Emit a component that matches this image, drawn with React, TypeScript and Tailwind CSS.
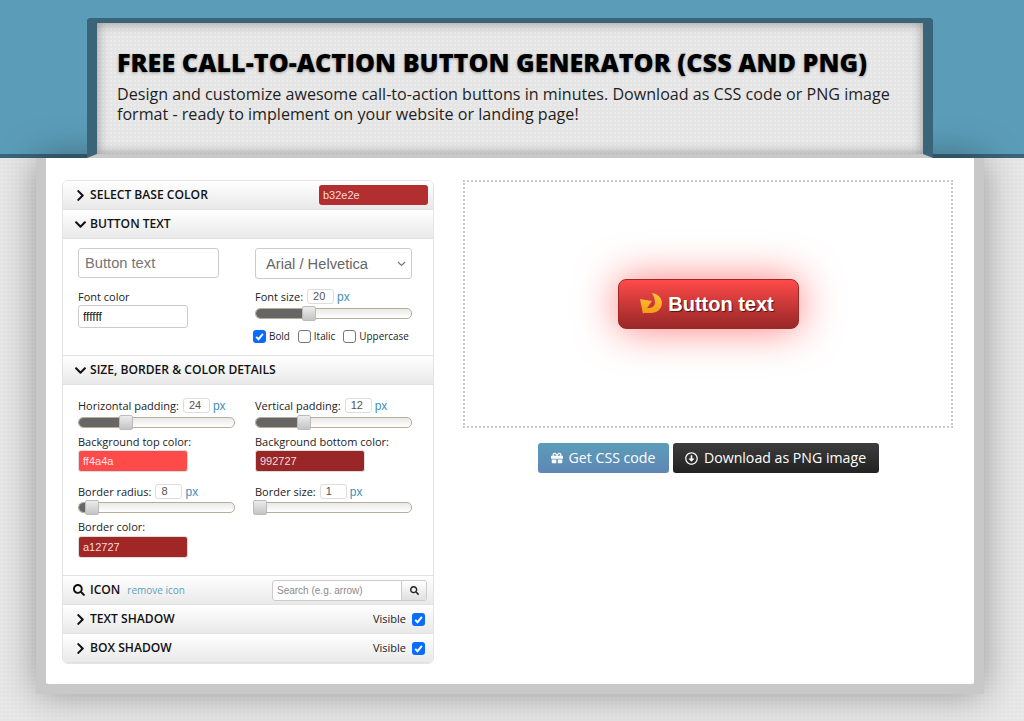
import { FaChevronDown, FaChevronRight, FaSearch, FaGift, FaRegArrowAltCircleDown } from "react-icons/fa";

const sans = "font-['Open_Sans',sans-serif]";
const arial = "font-['Liberation_Sans',Arial,sans-serif]";
const dither = "bg-[radial-gradient(rgba(255,255,255,0.22)_1px,transparent_1.5px)] bg-[length:4px_4px]";

function Check() {
  return (
    <span className="flex h-[13px] w-[13px] flex-shrink-0 items-center justify-center rounded-[3px] bg-[#0a6cff]">
      <svg width="11" height="11" viewBox="0 0 11 11" fill="none">
        <path d="M2.2 5.8 4.5 8.2 8.9 2.8" stroke="#fff" strokeWidth="1.9" />
      </svg>
    </span>
  );
}

function Box() {
  return <span className="h-[13px] w-[13px] flex-shrink-0 rounded-[3px] border border-[#767676] bg-white" />;
}

function Row({ children, open }: { children: React.ReactNode; open?: boolean }) {
  return (
    <div className="flex h-[29px] flex-shrink-0 items-center border-b border-[#e2e2e2] bg-gradient-to-b from-white to-[#e9e9e9] pl-[11px] pr-2">
      {open ? (
        <FaChevronDown className="mr-[3px] h-[13px] w-[13px] text-[#111]" />
      ) : (
        <FaChevronRight className="mr-[3px] h-[13px] w-[13px] text-[#111]" />
      )}
      {children}
    </div>
  );
}

function Title({ children }: { children: React.ReactNode }) {
  return <span className={`${sans} text-[12.1px] font-semibold uppercase text-[#111]`}>{children}</span>;
}

function Label({ children }: { children: React.ReactNode }) {
  return <span className={`${sans} block text-[11px] leading-[15px] text-[#222]`}>{children}</span>;
}

function Num({ value, w = "w-[27px]" }: { value: string; w?: string }) {
  return (
    <span className={`${arial} ml-[4px] mr-[3px] flex h-[15px] ${w} items-center rounded-[3px] border border-[#ddd] bg-white pl-[5px] text-[11px] text-[#555]`}>
      {value}
    </span>
  );
}

function Px() {
  return <span className={`${arial} text-[12px] leading-none text-[#3f8fb5]`}>px</span>;
}

function Slider({ fill, thumb }: { fill: string; thumb: string }) {
  return (
    <div className="relative h-[11px] w-[157px] rounded-[5px] border border-[#b8ad98] bg-gradient-to-b from-[#e9e9e9] to-white">
      <div className={`h-full rounded-l-[5px] bg-[#666] ${fill}`} />
      <div className={`absolute top-[-3px] h-[15px] w-[14px] rounded-[2px] border border-[#bbb] bg-gradient-to-b from-[#ececec] to-[#c4c4c4] ${thumb}`} />
    </div>
  );
}

function Swatch({ color, text, bg }: { color: string; text: string; bg: string }) {
  return (
    <div className={`${arial} flex h-[22px] w-[110px] items-center rounded-[3px] border border-[#ddd] pl-[4px] text-[11px] ${bg} ${color}`}>
      {text}
    </div>
  );
}

function CurlArrow() {
  return (
    <svg width="22" height="22" viewBox="0 0 22 22" className="mr-[6px] flex-shrink-0">
      <defs>
        <linearGradient id="curl" x1="0" y1="0" x2="0" y2="1">
          <stop offset="0" stopColor="#ffc63d" />
          <stop offset="1" stopColor="#f59a12" />
        </linearGradient>
      </defs>
      <path
        d="M12 0C18 1 22 5 22 10 22 16 17 20 11 20L4 20 6 15 8 15C12 15 15 13 15 10 15 7 14 3 12 0Z M0 6 12 8 3 21Z"
        fill="url(#curl)"
      />
    </svg>
  );
}

export default function App() {
  return (
    <div className={`flex h-[721px] w-[1024px] flex-col overflow-hidden bg-[#e6e6e6] ${dither}`}>
      <div className="flex h-[158px] flex-shrink-0 bg-[#5b9db9]">
        <div className="w-[87px] self-stretch border-b-4 border-[#3a6478]" />
        <div className="relative z-20 mt-[18px] w-[846px]">
          <div className="h-[140px] rounded-t-[4px] border-x-[10px] border-t-[5px] border-b-4 border-x-[#3a6478] border-t-[#3a6478] border-b-[#c8c8c8]">
            <div className={`h-full bg-[#e5e5e5] ${dither} pl-5 pt-[22px] shadow-[inset_0_0_12px_rgba(0,0,0,0.38)]`}>
              <h1 className={`${sans} text-[25.2px] font-extrabold uppercase leading-[34px] text-black [text-shadow:0_1px_3px_rgba(0,0,0,0.35)]`}>
                Free call-to-action button generator (CSS and PNG)
              </h1>
              <p className={`${sans} mt-[5px] w-[790px] text-[16.1px] leading-[20px] text-[#1e1e1e]`}>
                Design and customize awesome call-to-action buttons in minutes. Download as CSS code or PNG image format - ready to implement on your website or landing page!
              </p>
            </div>
          </div>
        </div>
        <div className="flex-1 self-stretch border-b-4 border-[#3a6478]" />
      </div>

      <div className="relative z-10 ml-[36px] flex h-[536px] w-[948px] flex-shrink-0 border-x-[10px] border-b-[10px] border-[#c8c8c8] shadow-[0_0_36px_rgba(0,0,0,0.36)]">
        <div className="flex h-full w-full rounded-b-[4px] bg-white pl-4 pr-[21px] pt-[22px]">
          <div className="flex h-[484px] w-[372px] flex-shrink-0 flex-col overflow-hidden rounded-[6px] border border-[#e4e4e4] bg-white">
            <Row>
              <Title>Select base color</Title>
              <span className={`${arial} ml-auto mr-[-3px] flex h-[20px] w-[109px] items-center rounded-[3px] bg-[#b32e2e] pl-[4px] text-[11px] text-[#f3dcdc]`}>
                b32e2e
              </span>
            </Row>
            <Row open>
              <Title>Button text</Title>
            </Row>

            <div className="grid h-[117px] flex-shrink-0 grid-cols-[177px_157px] border-b border-[#e2e2e2] pl-[15px] pt-[9px]">
              <div>
                <div className={`${arial} flex h-[30px] w-[141px] items-center rounded-[3px] border border-[#ccc] pl-[6px] text-[14.7px] text-[#757575]`}>
                  Button text
                </div>
                <div className="mt-[11px]">
                  <Label>Font color</Label>
                </div>
                <div className={`${arial} mt-[1px] flex h-[23px] w-[110px] items-center rounded-[3px] border border-[#ccc] pl-[4px] text-[12px] text-[#222]`}>
                  ffffff
                </div>
              </div>
              <div>
                <div className={`${arial} flex h-[31px] w-[157px] items-center justify-between rounded-[3px] border border-[#ccc] pl-[10px] pr-[5px] pt-[1px] text-[14.7px] text-[#666]`}>
                  Arial / Helvetica
                  <svg width="9" height="6" viewBox="0 0 9 6" fill="none">
                    <path d="M1 1 4.5 4.5 8 1" stroke="#777" strokeWidth="1.2" />
                  </svg>
                </div>
                <div className="mt-[10px] flex items-center">
                  <Label>Font size:</Label>
                  <Num value="20" />
                  <Px />
                </div>
                <div className="mt-[4px]">
                  <Slider fill="w-[46px]" thumb="left-[46px]" />
                </div>
                <div className={`${sans} ml-[-2px] mt-[10px] flex items-center text-[9.9px] text-[#222]`}>
                  <Check />
                  <span className="ml-[3px] mr-[8px]">Bold</span>
                  <Box />
                  <span className="ml-[3px] mr-[8px]">Italic</span>
                  <Box />
                  <span className="ml-[3px]">Uppercase</span>
                </div>
              </div>
            </div>

            <Row open>
              <Title>Size, border &amp; color details</Title>
            </Row>

            <div className="grid h-[191px] flex-shrink-0 grid-cols-[177px_157px] border-b border-[#e2e2e2] pl-[15px] pt-[13px]">
              <div>
                <div className="flex items-center">
                  <Label>Horizontal padding:</Label>
                  <Num value="24" />
                  <Px />
                </div>
                <div className="mt-[4px]">
                  <Slider fill="w-[40px]" thumb="left-[40px]" />
                </div>
                <div className="mt-[6px]">
                  <Label>Background top color:</Label>
                </div>
                <div className="mt-[1px]">
                  <Swatch bg="bg-[#ff4a4a]" color="text-[#ffe4e4]" text="ff4a4a" />
                </div>
                <div className="mt-[12px] flex items-center">
                  <Label>Border radius:</Label>
                  <Num value="8" />
                  <Px />
                </div>
                <div className="mt-[3px]">
                  <Slider fill="w-[6px]" thumb="left-[6px]" />
                </div>
                <div className="mt-[6px]">
                  <Label>Border color:</Label>
                </div>
                <div className="mt-[2px]">
                  <Swatch bg="bg-[#a12727]" color="text-[#f5dcdc]" text="a12727" />
                </div>
              </div>
              <div>
                <div className="flex items-center">
                  <Label>Vertical padding:</Label>
                  <Num value="12" />
                  <Px />
                </div>
                <div className="mt-[4px]">
                  <Slider fill="w-[41px]" thumb="left-[41px]" />
                </div>
                <div className="mt-[6px]">
                  <Label>Background bottom color:</Label>
                </div>
                <div className="mt-[1px]">
                  <Swatch bg="bg-[#992727]" color="text-[#f5dcdc]" text="992727" />
                </div>
                <div className="mt-[12px] flex items-center">
                  <Label>Border size:</Label>
                  <Num value="1" />
                  <Px />
                </div>
                <div className="mt-[3px]">
                  <Slider fill="w-0" thumb="left-[-3px]" />
                </div>
              </div>
            </div>

            <div className="flex h-[29px] flex-shrink-0 items-center border-b border-[#e2e2e2] bg-gradient-to-b from-white to-[#e9e9e9] pl-[10px] pr-[6px]">
              <FaSearch className="mr-[5px] h-[12px] w-[12px] text-[#111]" />
              <Title>Icon</Title>
              <span className={`${sans} ml-[7px] text-[10px] text-[#5c9fbd]`}>remove icon</span>
              <div className="ml-auto flex h-[21px] w-[155px] overflow-hidden rounded-[3px] border border-[#ccc] bg-white">
                <span className={`${arial} flex flex-1 items-center border-r border-[#ccc] pl-[4px] text-[10px] text-[#8a8a8a]`}>
                  Search (e.g. arrow)
                </span>
                <span className="flex w-[24px] items-center justify-center bg-gradient-to-b from-white to-[#e0e0e0]">
                  <FaSearch className="h-[9px] w-[9px] text-[#222]" />
                </span>
              </div>
            </div>
            <Row>
              <Title>Text shadow</Title>
              <span className={`${sans} ml-auto mr-[6px] text-[11px] text-[#222]`}>Visible</span>
              <Check />
            </Row>
            <Row>
              <Title>Box shadow</Title>
              <span className={`${sans} ml-auto mr-[6px] text-[11px] text-[#222]`}>Visible</span>
              <Check />
            </Row>
          </div>

          <div className="ml-[29px] flex flex-1 flex-col">
            <div className="flex h-[248px] items-center justify-center border-2 border-dotted border-[#c8c8c8]">
              <div className={`${arial} flex h-[50px] w-[181px] items-center justify-center rounded-[8px] border border-[#a12727] bg-gradient-to-b from-[#ff4a4a] to-[#992727] pr-[2px] text-[20px] font-bold text-white shadow-[0_0_40px_rgba(255,70,70,0.7)] [text-shadow:1px_1px_1px_rgba(0,0,0,0.6)]`}>
                <CurlArrow />
                Button text
              </div>
            </div>
            <div className={`${sans} mt-[15px] flex justify-center gap-[4px] text-[14.15px]`}>
              <div className="flex h-[30px] w-[131px] items-center justify-center rounded-[3px] bg-gradient-to-b from-[#5b9db9] to-[#5f86b5] text-white">
                <FaGift className="mr-[6px] h-[12px] w-[12px]" />
                Get CSS code
              </div>
              <div className="flex h-[30px] w-[206px] items-center justify-center rounded-[3px] bg-gradient-to-b from-[#3d3d3d] to-[#222] text-white">
                <FaRegArrowAltCircleDown className="mr-[6px] h-[13px] w-[13px]" />
                Download as PNG image
              </div>
            </div>
          </div>
        </div>
      </div>
    </div>
  );
}
